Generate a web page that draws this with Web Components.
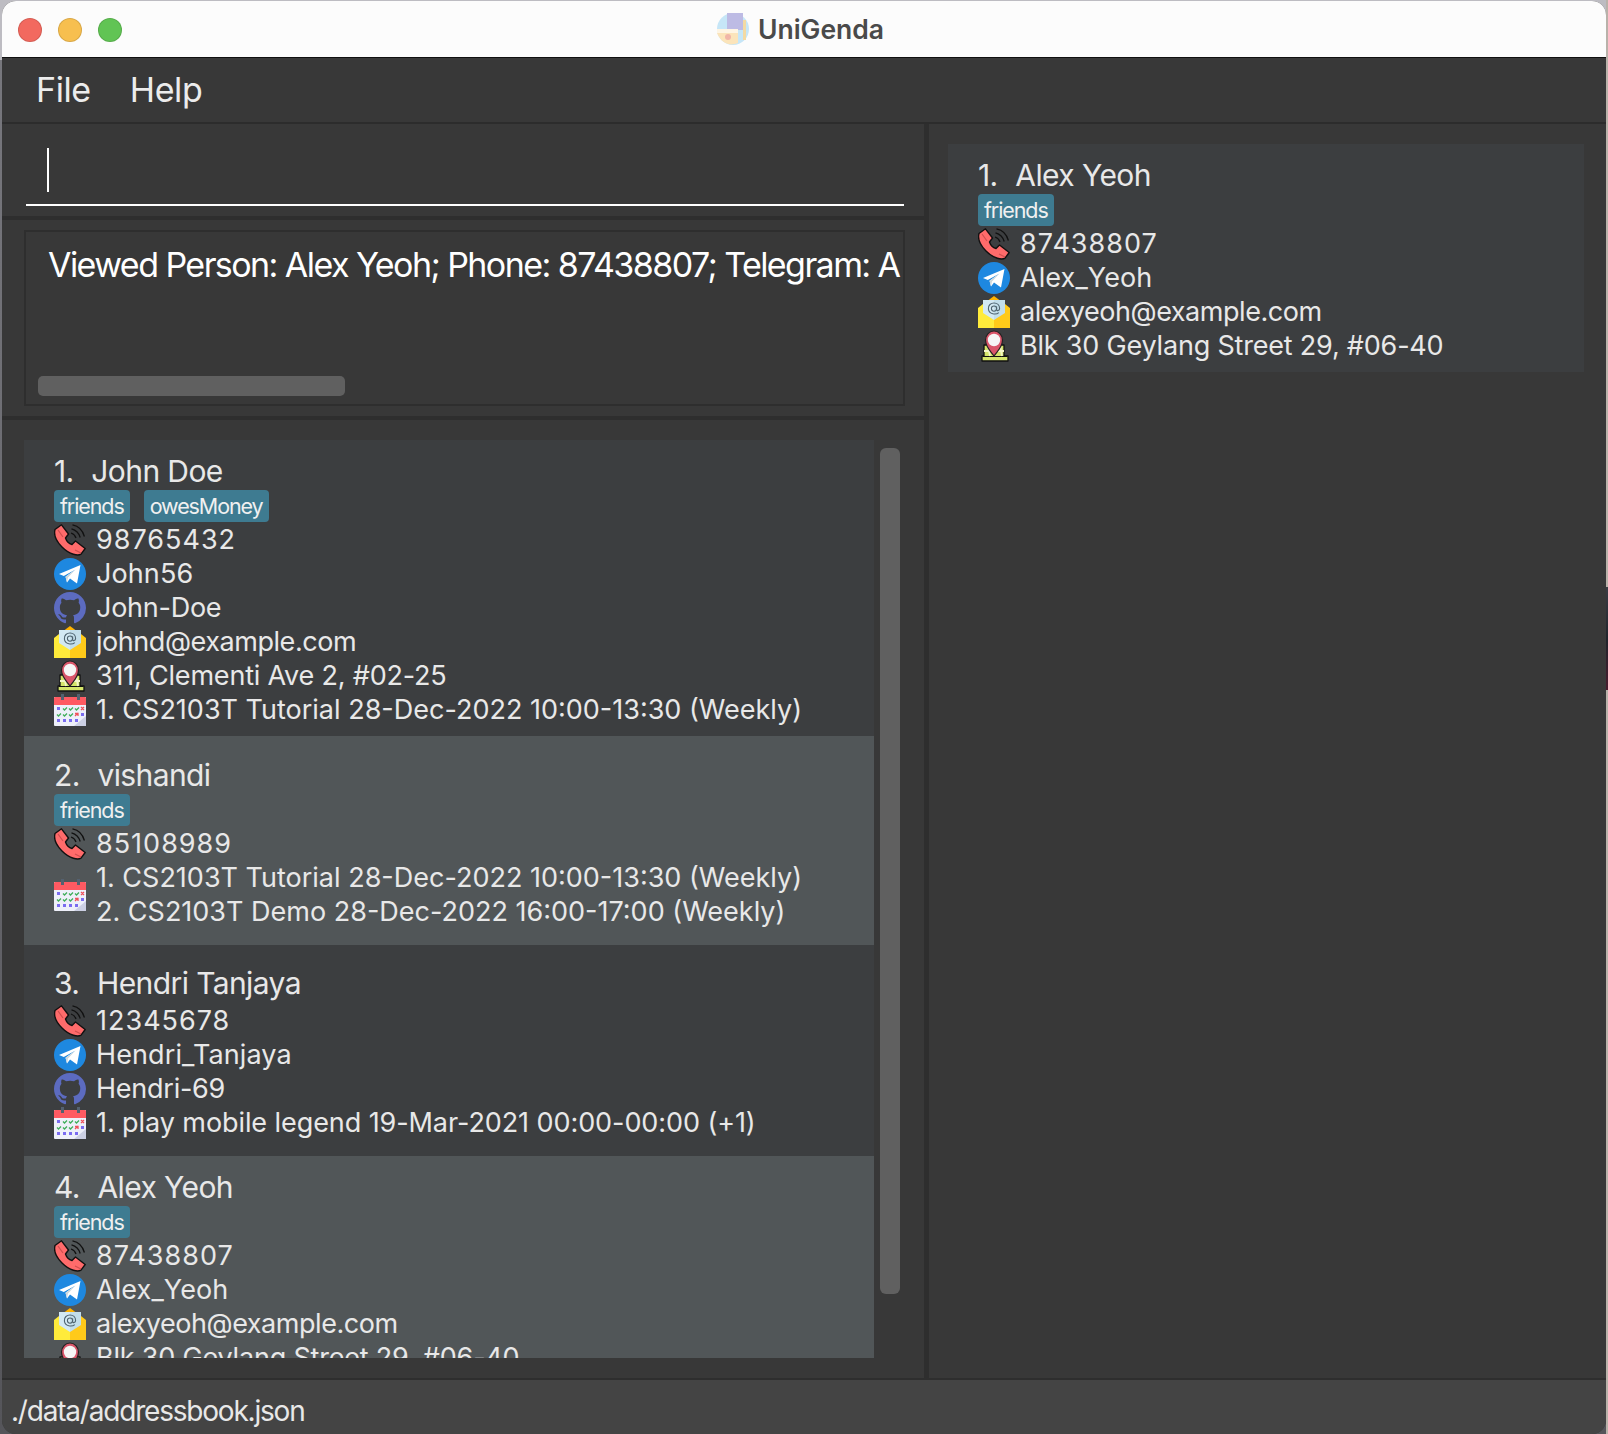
<!DOCTYPE html>
<html lang="en">
<head>
<meta charset="utf-8">
<title>UniGenda</title>
<style>
  html, body { margin: 0; padding: 0; }
  body {
    width: 1608px;
    height: 1434px;
    overflow: hidden;
    box-sizing: border-box;
    padding: 1px 2px 0 2px;
    font-family: Inter, "Liberation Sans", sans-serif;
    background:
      linear-gradient(to bottom, #b9b2aa 0, #b9b2aa 587px, #3a3d44 587px, #20242b 640px, #4a1c2e 690px, #b9b2aa 690px, #b9b2aa 100%) right top / 2px 100% no-repeat,
      linear-gradient(to bottom, #bdbcc2 0, #bdbcc2 60px, #77777d 60px, #55555a 100%);
  }
</style>
</head>
<body>
<app-window>
  <title-bar slot="title">UniGenda</title-bar>
  <menu-bar slot="menu"><span>File</span><span>Help</span></menu-bar>

  <command-box slot="command"></command-box>
  <result-box slot="result">Viewed Person: Alex Yeoh; Phone: 87438807; Telegram: A</result-box>

  <person-list slot="list">
    <person-card index="1" name="John Doe" top="12" bottom="9">
      <tag-label slot="tags">friends</tag-label>
      <tag-label slot="tags">owesMoney</tag-label>
      <info-row icon="phone">98765432</info-row>
      <info-row icon="telegram">John56</info-row>
      <info-row icon="github">John-Doe</info-row>
      <info-row icon="mail">johnd@example.com</info-row>
      <info-row icon="address">311, Clementi Ave 2, #02-25</info-row>
      <info-row icon="calendar">1. CS2103T Tutorial 28-Dec-2022 10:00-13:30 (Weekly)</info-row>
    </person-card>
    <person-card index="2" name="vishandi" even top="20" bottom="16">
      <tag-label slot="tags">friends</tag-label>
      <info-row icon="phone">85108989</info-row>
      <info-row icon="calendar"><div>1. CS2103T Tutorial 28-Dec-2022 10:00-13:30 (Weekly)</div><div>2. CS2103T Demo 28-Dec-2022 16:00-17:00 (Weekly)</div></info-row>
    </person-card>
    <person-card index="3" name="Hendri Tanjaya" top="19" bottom="16">
      <info-row icon="phone">12345678</info-row>
      <info-row icon="telegram">Hendri_Tanjaya</info-row>
      <info-row icon="github">Hendri-69</info-row>
      <info-row icon="calendar" style="letter-spacing:-0.08px">1. play mobile legend 19-Mar-2021 00:00-00:00 (+1)</info-row>
    </person-card>
    <person-card index="4" name="Alex Yeoh" even top="12" bottom="9">
      <tag-label slot="tags">friends</tag-label>
      <info-row icon="phone">87438807</info-row>
      <info-row icon="telegram">Alex_Yeoh</info-row>
      <info-row icon="mail">alexyeoh@example.com</info-row>
      <info-row icon="address">Blk 30 Geylang Street 29, #06-40</info-row>
    </person-card>
  </person-list>

  <person-card slot="detail" index="1" name="Alex Yeoh" top="12" bottom="9">
    <tag-label slot="tags">friends</tag-label>
    <info-row icon="phone">87438807</info-row>
    <info-row icon="telegram">Alex_Yeoh</info-row>
    <info-row icon="mail">alexyeoh@example.com</info-row>
    <info-row icon="address">Blk 30 Geylang Street 29, #06-40</info-row>
  </person-card>

  <status-bar slot="status">./data/addressbook.json</status-bar>
</app-window>

<script>
// Shared helper, every element gets an open shadow root from a string
function mount(el, html) {
  const shadow = el.attachShadow({ mode: 'open' });
  const template = document.createElement('template');
  template.innerHTML = html;
  shadow.appendChild(template.content.cloneNode(true));
  return shadow;
}

const ICONS = {
  phone: `
    <path d="M1 5.5 L7.5 .8 L14.5 10 L11.5 14 C12.5 17 14.5 19.5 18 20.5 L21.5 17 L31.2 24.5 L27 30.2 C24 32 16 31 8 23 C1 16 -.2 10 1 5.5 Z" fill="#ff6b6b" stroke="#111" stroke-width="1.4" stroke-linejoin="round"/>
    <path d="M4 6 L9 13 M21 26 L27 29" stroke="#d04f4f" stroke-width="1.2" fill="none"/>
    <g fill="none" stroke="#111" stroke-width="1.3">
      <path d="M17 9 C19.5 9.8 21.2 11.5 22 14"/>
      <path d="M17.5 4.8 C22 6 25 9 26.2 13.5"/>
      <path d="M18.5 .8 C24.5 2 28.8 6.5 30.4 12.5"/>
    </g>`,
  telegram: `
    <circle cx="16" cy="16" r="16" fill="#1e88e0"/>
    <path d="M5 16 L26.5 7 L23 25.5 L16 20.5 L13 24.5 L11.5 18.8 L21.5 11.5 L9.8 18 Z" fill="#fff"/>
    <path d="M11.5 18.8 L21.5 11.5 L14 19.5 L13 24.5 Z" fill="#cfd8dc"/>`,
  github: `
    <g transform="scale(2)"><path fill="#5c6bc0" fill-rule="evenodd" d="M8 0C3.58 0 0 3.58 0 8c0 3.54 2.29 6.53 5.47 7.59.4.07.55-.17.55-.38 0-.19-.01-.82-.01-1.49-2.01.37-2.53-.49-2.69-.94-.09-.23-.48-.94-.82-1.13-.28-.15-.68-.52-.01-.53.63-.01 1.08.58 1.23.82.72 1.21 1.87.87 2.33.66.07-.52.28-.87.51-1.07-1.78-.2-3.64-.89-3.64-3.95 0-.87.31-1.59.82-2.15-.08-.2-.36-1.02.08-2.12 0 0 .67-.21 2.2.82.64-.18 1.32-.27 2-.27.68 0 1.36.09 2 .27 1.53-1.04 2.2-.82 2.2-.82.44 1.1.16 1.92.08 2.12.51.56.82 1.27.82 2.15 0 3.07-1.87 3.75-3.65 3.95.29.25.54.73.54 1.48 0 1.07-.01 1.93-.01 2.2 0 .21.15.46.55.38A8.013 8.013 0 0016 8c0-4.42-3.58-8-8-8z"/></g>`,
  mail: `
    <path d="M16 0 L24 6 H8 Z" fill="#ffb300"/>
    <path d="M5 4 H27 V20 L16 27 L5 20 Z" fill="#d3e9f3"/>
    <path d="M16 4 H27 V20 L16 27 Z" fill="#c2deea"/>
    <g fill="none" stroke="#4f6470" stroke-width="1.1">
      <path d="M20.8 16.6 C18 19 11 18.4 10.4 13 C10 9 13 7 16 7 C19 7 21.6 9 21.6 12.4 C21.6 14.8 18.6 15.4 18.6 13.4 V10.6"/>
      <circle cx="16" cy="12.6" r="2.6"/>
    </g>
    <path d="M0 12 L5 8 V17 L16 24 V32 H0 Z" fill="#ffeb3b"/>
    <path d="M32 12 L27 8 V17 L16 24 V32 H32 Z" fill="#ffca1a"/>`,
  address: `
    <path d="M6 15 H26 V26 H30 V31 H4 V26 H6 Z" fill="#d4e56b" stroke="#111" stroke-width="1.3" stroke-linejoin="round"/>
    <path d="M5 26.5 H29" stroke="#111" stroke-width="1"/>
    <path d="M6 21 H26 M10 15 L12 26 M22 15 L24 26" stroke="#f3f6c8" stroke-width="1.8" fill="none"/>
    <path d="M16 26 C12.5 21 7.5 17 7.5 10 C7.5 5 11.5 1 16 1 C20.5 1 24.5 5 24.5 10 C24.5 17 19.5 21 16 26 Z" fill="#d9566a" stroke="#222" stroke-width="1.2"/>
    <circle cx="16" cy="10" r="6.2" fill="#f6f6f6"/>`,
  calendar: `
    <rect x="0" y="3" width="32" height="29" rx="1" fill="#eef0fa"/>
    <path d="M32 22 V32 H20 Z" fill="#ccd0e4"/>
    <path d="M0 4 C0 3 1 3 2 3 H30 C31 3 32 3 32 4 V11 H0 Z" fill="#ff5a62"/>
    <rect x="7" y="0" width="3" height="6" fill="#546170"/>
    <rect x="23" y="0" width="3" height="6" fill="#546170"/>
    <g fill="#7a6cf0">
      <rect x="3" y="13" width="3" height="3"/><rect x="27" y="19" width="3" height="3"/>
      <rect x="3" y="25" width="3" height="3"/><rect x="9" y="25" width="3" height="3"/>
      <rect x="15" y="25" width="3" height="3"/><rect x="21" y="25" width="3" height="3"/>
    </g>
    <g fill="none" stroke="#3fae5a" stroke-width="1.3">
      <path d="M9 14.5 l1.5 1.5 l2.5 -2.5 M15 14.5 l1.5 1.5 l2.5 -2.5 M21 14.5 l1.5 1.5 l2.5 -2.5"/>
      <path d="M3 20.5 l1.5 1.5 l2.5 -2.5 M9 20.5 l1.5 1.5 l2.5 -2.5 M15 20.5 l1.5 1.5 l2.5 -2.5"/>
    </g>
    <path d="M27 13 l3 3 M30 13 l-3 3 M21 22 l3 -3 M21 19.5 h3 v2.5" stroke="#f0525c" stroke-width="1.3" fill="none"/>`
};

class AppWindow extends HTMLElement {
  constructor() {
    super();
    mount(this, `
      <style>
        :host {
          display: flex;
          flex-direction: column;
          width: 1604px;
          height: 1433px;
          background: #383838;
          border-radius: 14px;
          overflow: hidden;
        }
        .main { flex: 1; display: flex; min-height: 0; }
        .left { width: 922px; display: flex; flex-direction: column; }
        .split { width: 5px; background: #2e2e2e; }
        .right { flex: 1; box-sizing: border-box; padding: 20px 22px 0 19px; }
      </style>
      <slot name="title"></slot>
      <slot name="menu"></slot>
      <div class="main">
        <div class="left">
          <slot name="command"></slot>
          <slot name="result"></slot>
          <slot name="list"></slot>
        </div>
        <div class="split"></div>
        <div class="right"><slot name="detail"></slot></div>
      </div>
      <slot name="status"></slot>
    `);
  }
}

class TitleBar extends HTMLElement {
  constructor() {
    super();
    mount(this, `
      <style>
        :host {
          display: flex;
          align-items: center;
          justify-content: center;
          position: relative;
          box-sizing: border-box;
          height: 57px;
          padding: 0 7px 1px 0;
          background: #fcfcfc;
          border-bottom: 1px solid #111;
          color: #4a4a4a;
          font: 600 26.5px Inter, "Liberation Sans", sans-serif;
        }
        .lights { position: absolute; left: 16px; top: 17px; display: flex; gap: 16px; }
        .lights i { width: 24px; height: 24px; border-radius: 50%; box-sizing: border-box; border: 1px solid rgba(0,0,0,.12); }
        .logo { width: 32px; height: 32px; margin-right: 9px; opacity: .75; }
      </style>
      <div class="lights">
        <i style="background:#f2695f"></i><i style="background:#f7bf4f"></i><i style="background:#61c454"></i>
      </div>
      <svg class="logo" viewBox="0 0 32 32">
        <circle cx="16" cy="16" r="16" fill="#b5dff6"/>
        <path d="M10 0 H26 V17 H10 Z" fill="#a9a6dc"/>
        <path d="M26 7 H29 V27 H26 Z" fill="#f0cf86"/>
        <path d="M0 16 H21 V30 C14 33 5 32 0 20 Z" fill="#fbdca4"/>
        <rect x="0" y="16" width="21" height="4" fill="#fff3dc"/>
        <circle cx="11" cy="24" r="3" fill="#ee9f8c"/>
      </svg>
      <slot></slot>
    `);
  }
}

class MenuBar extends HTMLElement {
  constructor() {
    super();
    mount(this, `
      <style>
        :host {
          display: flex;
          align-items: center;
          gap: 39px;
          box-sizing: border-box;
          height: 66px;
          padding: 0 0 2px 34px;
          background: #383838;
          border-bottom: 2px solid #2c2c2c;
          color: #ececec;
          font: 34px Inter, "Liberation Sans", sans-serif;
          letter-spacing: -0.4px;
        }
      </style>
      <slot></slot>
    `);
  }
}

class CommandBox extends HTMLElement {
  constructor() {
    super();
    mount(this, `
      <style>
        :host { display: block; box-sizing: border-box; height: 96px; padding: 0 20px 10px 24px; border-bottom: 4px solid #2e2e2e; }
        .field { position: relative; box-sizing: border-box; height: 82px; border-bottom: 2px solid #fff; }
        .caret { position: absolute; left: 21px; top: 24px; width: 1.5px; height: 44px; background: #fff; }
      </style>
      <div class="field"><div class="caret"></div></div>
    `);
  }
}

class ResultBox extends HTMLElement {
  constructor() {
    super();
    mount(this, `
      <style>
        :host { display: block; box-sizing: border-box; height: 200px; padding: 10px 19px 10px 22px; border-bottom: 4px solid #2e2e2e; }
        .box {
          position: relative;
          box-sizing: border-box;
          height: 176px;
          border: 2px solid #2e2e2e;
          padding: 11px 0 0 22px;
          overflow: hidden;
          white-space: nowrap;
          color: #fff;
          font: 34px/44px Inter, "Liberation Sans", sans-serif;
          letter-spacing: -1.56px;
        }
        .thumb { position: absolute; left: 12px; bottom: 8px; width: 307px; height: 20px; border-radius: 5px; background: #606060; }
      </style>
      <div class="box"><slot></slot><div class="thumb"></div></div>
    `);
  }
}

class PersonList extends HTMLElement {
  constructor() {
    super();
    mount(this, `
      <style>
        :host { display: flex; gap: 6px; box-sizing: border-box; height: 958px; padding: 20px 0 20px 22px; }
        .cards { width: 850px; overflow: hidden; }
        .thumb { width: 20px; height: 846px; margin-top: 8px; border-radius: 6px; background: #606060; }
      </style>
      <div class="cards"><slot></slot></div>
      <div class="thumb"></div>
    `);
  }
}

class PersonCard extends HTMLElement {
  constructor() {
    super();
    const shadow = mount(this, `
      <style>
        :host { display: block; box-sizing: border-box; padding-left: 30px; background: #3c3e40; color: #e8e8e8; font-family: Inter, "Liberation Sans", sans-serif; }
        :host([even]) { background: #515658; }
        .name { height: 38px; font-size: 30px; line-height: 38px; white-space: pre; letter-spacing: -0.6px; }
        .index { margin-right: 2px; }
        .tags { display: flex; gap: 14px; margin-bottom: 1px; }
        .tags.no-tags { margin: 2px 0 0; }
      </style>
      <div class="name"><span class="index"></span><span class="label"></span></div>
      <div class="tags"><slot name="tags"></slot></div>
      <slot></slot>
    `);
    shadow.querySelector('.index').textContent = this.getAttribute('index') + '.  ';
    shadow.querySelector('.label').textContent = this.getAttribute('name');
    this.style.paddingTop = this.getAttribute('top') + 'px';
    this.style.paddingBottom = this.getAttribute('bottom') + 'px';
    if (!this.querySelector('tag-label')) shadow.querySelector('.tags').classList.add('no-tags');
  }
}

class TagLabel extends HTMLElement {
  constructor() {
    super();
    mount(this, `
      <style>
        :host {
          display: block;
          height: 32px;
          padding: 0 6px;
          border-radius: 4px;
          background: #3e7b91;
          color: #f0f0f0;
          font-size: 21.5px;
          line-height: 33px;
          letter-spacing: -1.1px;
        }
      </style>
      <slot></slot>
    `);
  }
}

class InfoRow extends HTMLElement {
  constructor() {
    super();
    const shadow = mount(this, `
      <style>
        :host { display: flex; align-items: center; gap: 10px; line-height: 34px; font-size: 27px; white-space: nowrap; }
        /* Inter runs narrower on digits than the original font, so tracking differs per row kind */
        :host([icon=phone]) { letter-spacing: 1px; }
        :host([icon=telegram]) { letter-spacing: 0.1px; }
        :host([icon=github]) { letter-spacing: -0.25px; }
        :host([icon=mail]) { letter-spacing: -0.45px; }
        :host([icon=address]) { letter-spacing: -0.2px; }
        :host([icon=calendar]) { letter-spacing: 0; }
        svg { flex: none; width: 32px; height: 32px; }
      </style>
      <svg viewBox="0 0 32 32"></svg>
      <div><slot></slot></div>
    `);
    shadow.querySelector('svg').innerHTML = ICONS[this.getAttribute('icon')];
  }
}

class StatusBar extends HTMLElement {
  constructor() {
    super();
    mount(this, `
      <style>
        :host {
          display: flex;
          align-items: center;
          box-sizing: border-box;
          height: 56px;
          padding: 7px 0 0 9px;
          background: #444;
          border-top: 2px solid #2e2e2e;
          color: #e8e8e8;
          font: 28px Inter, "Liberation Sans", sans-serif;
          letter-spacing: -1.2px;
        }
      </style>
      <slot></slot>
    `);
  }
}

customElements.define('app-window', AppWindow);
customElements.define('title-bar', TitleBar);
customElements.define('menu-bar', MenuBar);
customElements.define('command-box', CommandBox);
customElements.define('result-box', ResultBox);
customElements.define('person-list', PersonList);
customElements.define('person-card', PersonCard);
customElements.define('tag-label', TagLabel);
customElements.define('info-row', InfoRow);
customElements.define('status-bar', StatusBar);
</script>
</body>
</html>
